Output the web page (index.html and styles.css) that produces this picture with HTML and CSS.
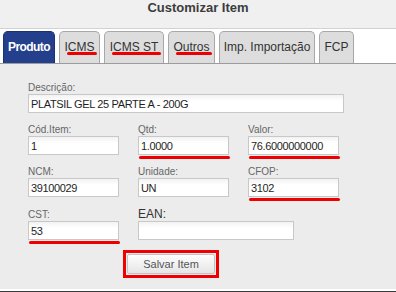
FILE: index.html
```html
<!DOCTYPE html>
<html>
<head>
    <title>Customizar Item</title>
    <link rel="stylesheet" href="styles.css">
</head>
<body>

<div class="dialog">
    <div class="dialog-title">Customizar Item</div>

    <ul class="tabs">
        <li class="tab active tab-produto">Produto</li>
        <li class="tab marked tab-icms">ICMS</li>
        <li class="tab marked tab-icms-st">ICMS ST</li>
        <li class="tab marked tab-outros">Outros</li>
        <li class="tab tab-importacao">Imp. Importação</li>
        <li class="tab tab-fcp">FCP</li>
    </ul>

    <div class="panel">
        <form class="item-form">
            <div class="form-row">
                <div class="field">
                    <label for="descricao">Descrição:</label>
                    <input type="text" id="descricao" class="input-wide" value="PLATSIL GEL 25 PARTE A - 200G">
                </div>
            </div>

            <div class="form-row cols">
                <div class="field">
                    <label for="codItem">Cód.Item:</label>
                    <input type="text" id="codItem" value="1">
                </div>
                <div class="field marked">
                    <label for="qtd">Qtd:</label>
                    <input type="text" id="qtd" value="1.0000">
                </div>
                <div class="field marked">
                    <label for="valor">Valor:</label>
                    <input type="text" id="valor" value="76.6000000000">
                </div>
            </div>

            <div class="form-row cols">
                <div class="field">
                    <label for="ncm">NCM:</label>
                    <input type="text" id="ncm" value="39100029">
                </div>
                <div class="field">
                    <label for="unidade">Unidade:</label>
                    <input type="text" id="unidade" value="UN">
                </div>
                <div class="field marked">
                    <label for="cfop">CFOP:</label>
                    <input type="text" id="cfop" value="3102">
                </div>
            </div>

            <div class="form-row cols last-row">
                <div class="field marked">
                    <label for="cst">CST:</label>
                    <input type="text" id="cst" value="53">
                </div>
                <div class="field field-ean">
                    <label for="ean">EAN:</label>
                    <input type="text" id="ean" class="input-ean" value="">
                </div>
            </div>

            <div class="actions">
                <span class="save-box">
                    <button type="button">Salvar Item</button>
                </span>
            </div>
        </form>
    </div>

    <div class="bottom-edge"></div>
</div>

</body>
</html>
```

FILE: styles.css
```css
body {
    margin: 0;
    font-family: "Liberation Sans", Arial, sans-serif;
    background: #fff;
}
.dialog {
    width: 396px;
    height: 292px;
    overflow: hidden;
}
.dialog-title {
    height: 28px;
    line-height: 16px;
    background: #f0f0f0;
    border-bottom: 1px solid #d2d2d2;
    text-align: center;
    font-size: 13px;
    font-weight: bold;
    color: #3c3c3c;
}

/* tabs */
.tabs {
    display: flex;
    gap: 4px;
    list-style: none;
    margin: 0;
    padding: 2px 0 0 3px;
    background: #fff;
    border-bottom: 1px solid #9c9c9c;
}
.tab {
    position: relative;
    height: 32px;
    line-height: 31px;
    padding: 0;
    box-sizing: border-box;
    text-align: center;
    white-space: nowrap;
    background: #dddddd;
    border: 1px solid #a8a8a8;
    border-bottom: none;
    border-radius: 5px 5px 0 0;
    font-size: 12px;
    color: #333;
}
.tab.active {
    background: #243f8c;
    border-color: #1d3273;
    color: #fff;
    font-weight: bold;
    letter-spacing: -0.6px;
}
.tab-produto { width: 52px; }
.tab-icms { width: 41px; }
.tab-icms-st { width: 60px; }
.tab-outros { width: 47px; }
.tab-importacao { width: 96px; }
.tab-fcp { width: 35px; }
.tab.marked::after {
    content: "";
    position: absolute;
    left: 7px;
    right: 2px;
    bottom: 8px;
    height: 3px;
    border-radius: 2px;
    background: #ee0000;
}

/* form panel */
.panel {
    height: 225px;
    box-sizing: border-box;
    padding: 18px 0 0 28px;
    background: #ececec;
}
.form-row {
    margin-bottom: 11px;
}
.form-row.cols {
    display: grid;
    grid-template-columns: 91px 91px 91px;
    column-gap: 19px;
}
.form-row.last-row {
    margin-top: 12px;
    margin-bottom: 10px;
}
.field {
    position: relative;
}
.field label {
    display: block;
    font-size: 10px;
    line-height: 11px;
    margin-bottom: 1px;
    color: #666;
}
.field-ean label {
    font-size: 12px;
    color: #333;
}
.field input {
    display: block;
    width: 91px;
    height: 19px;
    box-sizing: border-box;
    margin: 0;
    padding: 0 2px;
    border: 1px solid #c8c8c8;
    background: linear-gradient(to bottom, #f2f2f2 0, #fff 6px);
    font-family: "Liberation Sans", Arial, sans-serif;
    font-size: 11px;
    letter-spacing: -0.35px;
    color: #1e1e1e;
}
.field input.input-wide {
    width: 316px;
}
.field input.input-ean {
    width: 156px;
}
.field.marked::after {
    content: "";
    position: absolute;
    left: 1px;
    right: -1px;
    top: calc(100% + 1px);
    height: 3px;
    border-radius: 2px;
    background: #ee0000;
}

.actions {
    padding-left: 95px;
}
.save-box {
    display: inline-block;
    border: 3px solid #ee0000;
    padding: 1px;
}
.save-box button {
    display: block;
    width: 88px;
    height: 20px;
    padding: 0;
    border: 1px solid #c4c4c4;
    border-radius: 2px;
    background: linear-gradient(to bottom, #fdfdfd, #e6e6e6);
    font-family: "Liberation Sans", Arial, sans-serif;
    font-size: 11px;
    color: #555;
    cursor: pointer;
}

.bottom-edge {
    height: 2px;
    background: #fff;
    border-bottom: 1px solid #3a3a3a;
}
```
